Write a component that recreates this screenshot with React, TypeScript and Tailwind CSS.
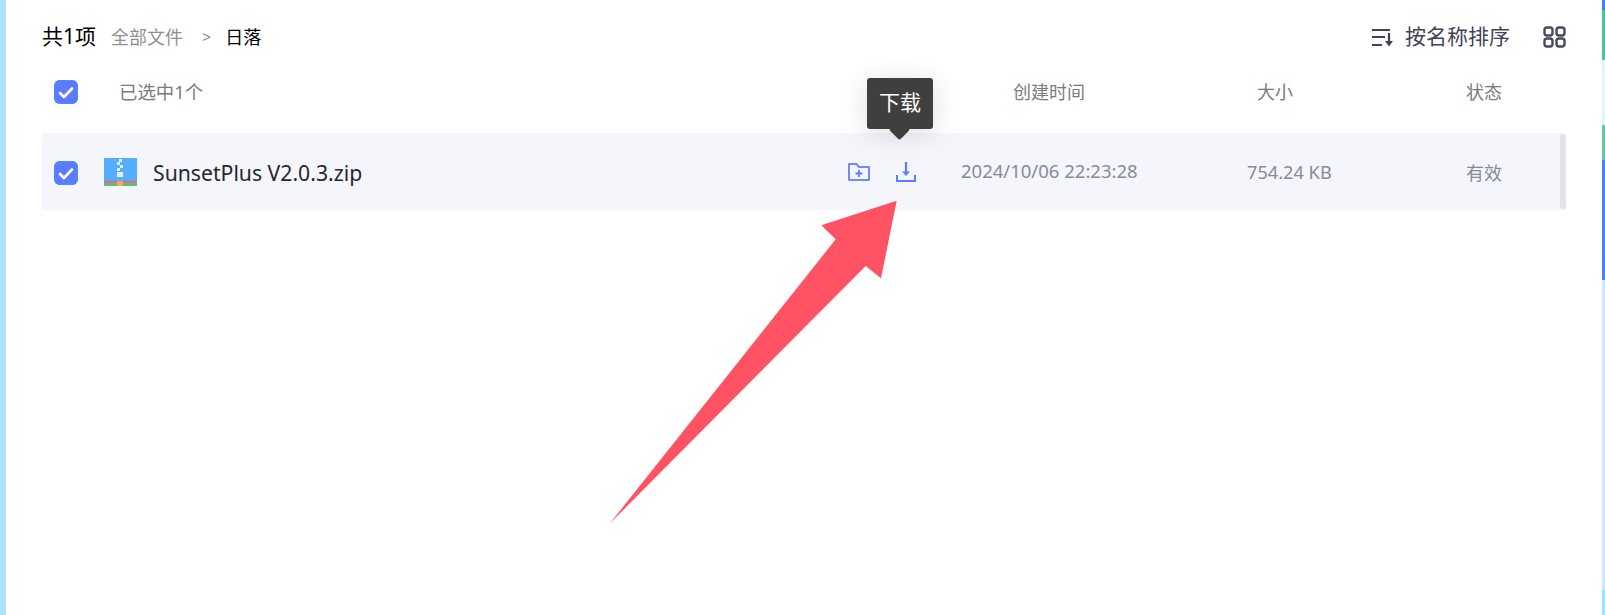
const cjk = "font-['Noto_Sans','Noto_Sans_CJK_SC',sans-serif]";

function Check() {
  return (
    <div className="flex h-6 w-6 items-center justify-center rounded-[6px] bg-[#5b7cff] shadow-[inset_0_0_0_1px_#4c8dff]">
      <svg width="16" height="13" viewBox="0 0 16 13" fill="none">
        <path d="M2 7l4 4 8-8.500" stroke="#fff" strokeWidth="2.600" strokeLinecap="round" strokeLinejoin="round" />
      </svg>
    </div>
  );
}

function ZipIcon() {
  return (
    <svg width="34" height="28" viewBox="0 0 34 28" shapeRendering="crispEdges">
      <rect x="0.500" width="33" height="23" fill="#54adff" />
      <rect x="0.500" y="23" width="33" height="2" fill="#f0686c" />
      <rect x="0.500" y="25" width="33" height="3" fill="#4cc38a" />
      <rect x="14" y="23" width="6" height="5" fill="#fba948" />
      <rect x="16" y="1" width="3" height="3" fill="#dff0ff" />
      <rect x="14" y="4" width="3" height="3" fill="#dff0ff" />
      <rect x="17" y="7" width="3" height="3" fill="#dff0ff" />
      <rect x="14" y="10" width="3" height="3" fill="#dff0ff" />
      <rect x="14" y="14" width="6" height="5" fill="#e6f3ff" />
    </svg>
  );
}

function FolderPlus() {
  return (
    <svg width="22" height="18" viewBox="0 0 22 18" fill="none" stroke="#6f8cff" strokeWidth="2">
      <path d="M1 1h7.500l2.500 3h10v13H1z" strokeLinejoin="round" />
      <path d="M7.500 10.500h7M11 7v7" strokeWidth="1.800" stroke="#5b7cff" />
    </svg>
  );
}

function Download() {
  return (
    <svg width="20" height="20" viewBox="0 0 20 20" fill="none" stroke="#5b7cff" strokeWidth="2">
      <path d="M1 13v6h18v-6" />
      <path d="M10 0v11" strokeWidth="2.200" />
      <path d="M6 9.500h8L10 14z" fill="#5b7cff" stroke="none" />
    </svg>
  );
}

function SortIcon() {
  return (
    <svg width="22" height="20" viewBox="0 0 22 20" fill="none" stroke="#3f4458" strokeWidth="2.200">
      <path d="M0 3h18M0 10h13M0 18h10" />
      <path d="M17 6v11" strokeWidth="2.200" />
      <path d="M13 14h8l-4 5.500z" fill="#3f4458" stroke="none" />
    </svg>
  );
}

function GridIcon() {
  return (
    <svg width="23" height="22" viewBox="0 0 23 22" fill="none" stroke="#454a60" strokeWidth="2.400">
      <rect x="1.500" y="1.500" width="8" height="8" rx="2.500" />
      <rect x="13.500" y="1.500" width="8" height="8" rx="2.500" />
      <rect x="1.500" y="12.500" width="8" height="8" rx="2.500" />
      <rect x="13.500" y="12.500" width="8" height="8" rx="2.500" />
    </svg>
  );
}

export default function App() {
  return (
    <div className={`relative flex h-[615px] w-[1605px] overflow-hidden bg-white ${cjk}`}>
      <div className="w-[6px] bg-[#aee0ff]" />

      <main className="flex flex-1 flex-col pl-9 pr-[36px] pt-6">
        <div className="flex h-[26px] items-center">
          <span className="text-[21px] text-black">共1项</span>
          <span className="ml-[15px] text-[18px] text-[#8f8f8f]">全部文件</span>
          <span className="ml-[19px] text-[16px] text-[#8f8f8f]">&gt;</span>
          <span className="ml-[14px] text-[18px] text-black">日落</span>
          <div className="ml-auto flex items-center">
            <SortIcon />
            <span className="ml-[11px] text-[21px] text-[#3f4458]">按名称排序</span>
            <div className="ml-[33px]">
              <GridIcon />
            </div>
          </div>
        </div>

        <div className="mt-[18px] flex h-[48px] items-center text-[18px] text-[#7b7b7b]">
          <div className="ml-3">
            <Check />
          </div>
          <span className="ml-[41px] text-[18.4px]">已选中1个</span>
          <span className="ml-auto">创建时间</span>
          <span className="ml-[172px]">大小</span>
          <span className="ml-[173px] mr-[64px]">状态</span>
        </div>

        <div className="relative mt-[17px] flex h-[77px] items-center bg-[#f5f6fb] pl-3 pr-[64px] pt-[3px]">
          <Check />
          <div className="ml-[25px] -mt-[2px]">
            <ZipIcon />
          </div>
          <span className="ml-4 text-[21.2px] text-[#25272e]">SunsetPlus V2.0.3.zip</span>
          <div className="ml-auto -mt-[3px] flex items-center">
            <FolderPlus />
            <div className="relative ml-[26px]">
              <Download />
              <div className="absolute bottom-[53px] left-[-29px] flex h-[51px] w-[66px] items-center justify-center rounded-[3px] bg-[#3f3f3f] text-[21px] text-white shadow-[0_4px_28px_rgba(0,0,0,0.14)]">
                下载
                <div className="absolute left-[25px] top-[44px] h-[15px] w-[15px] rotate-45 rounded-[2px] bg-[#3f3f3f]" />
              </div>
            </div>
          </div>
          <span className="ml-[45px] -mt-[4px] w-[178px] text-[18.5px] text-[#868b9b]">2024/10/06 22:23:28</span>
          <span className="ml-[108px] w-[85px] text-[18.2px] text-[#868b9b]">754.24 KB</span>
          <span className="ml-[134px] text-[18px] text-[#868b9b]">有效</span>
          <div className="absolute bottom-px right-0 top-px w-[6px] rounded-[3px] bg-[#e3e3e6]" />
        </div>
      </main>

      <div className="flex w-[3px] flex-col">
        <div className="h-[10px] bg-[#3f80ff]" />
        <div className="h-[50px] bg-[#4fc59c]" />
        <div className="h-[65px] bg-[#e2f8f8]" />
        <div className="h-[35px] bg-[#67c3a0]" />
        <div className="h-[120px] bg-[#4a82f5]" />
        <div className="h-[310px] bg-[#cfe7fd]" />
        <div className="flex-1 bg-[#97e5fb]" />
      </div>

      <svg className="pointer-events-none absolute left-0 top-0" width="1605" height="615" viewBox="0 0 1605 615">
        <polygon
          points="896.700,200.700 821.300,225.300 835.700,239.300 610,523.300 865.700,266 881,278.300"
          fill="#ff5364"
        />
      </svg>
    </div>
  );
}
